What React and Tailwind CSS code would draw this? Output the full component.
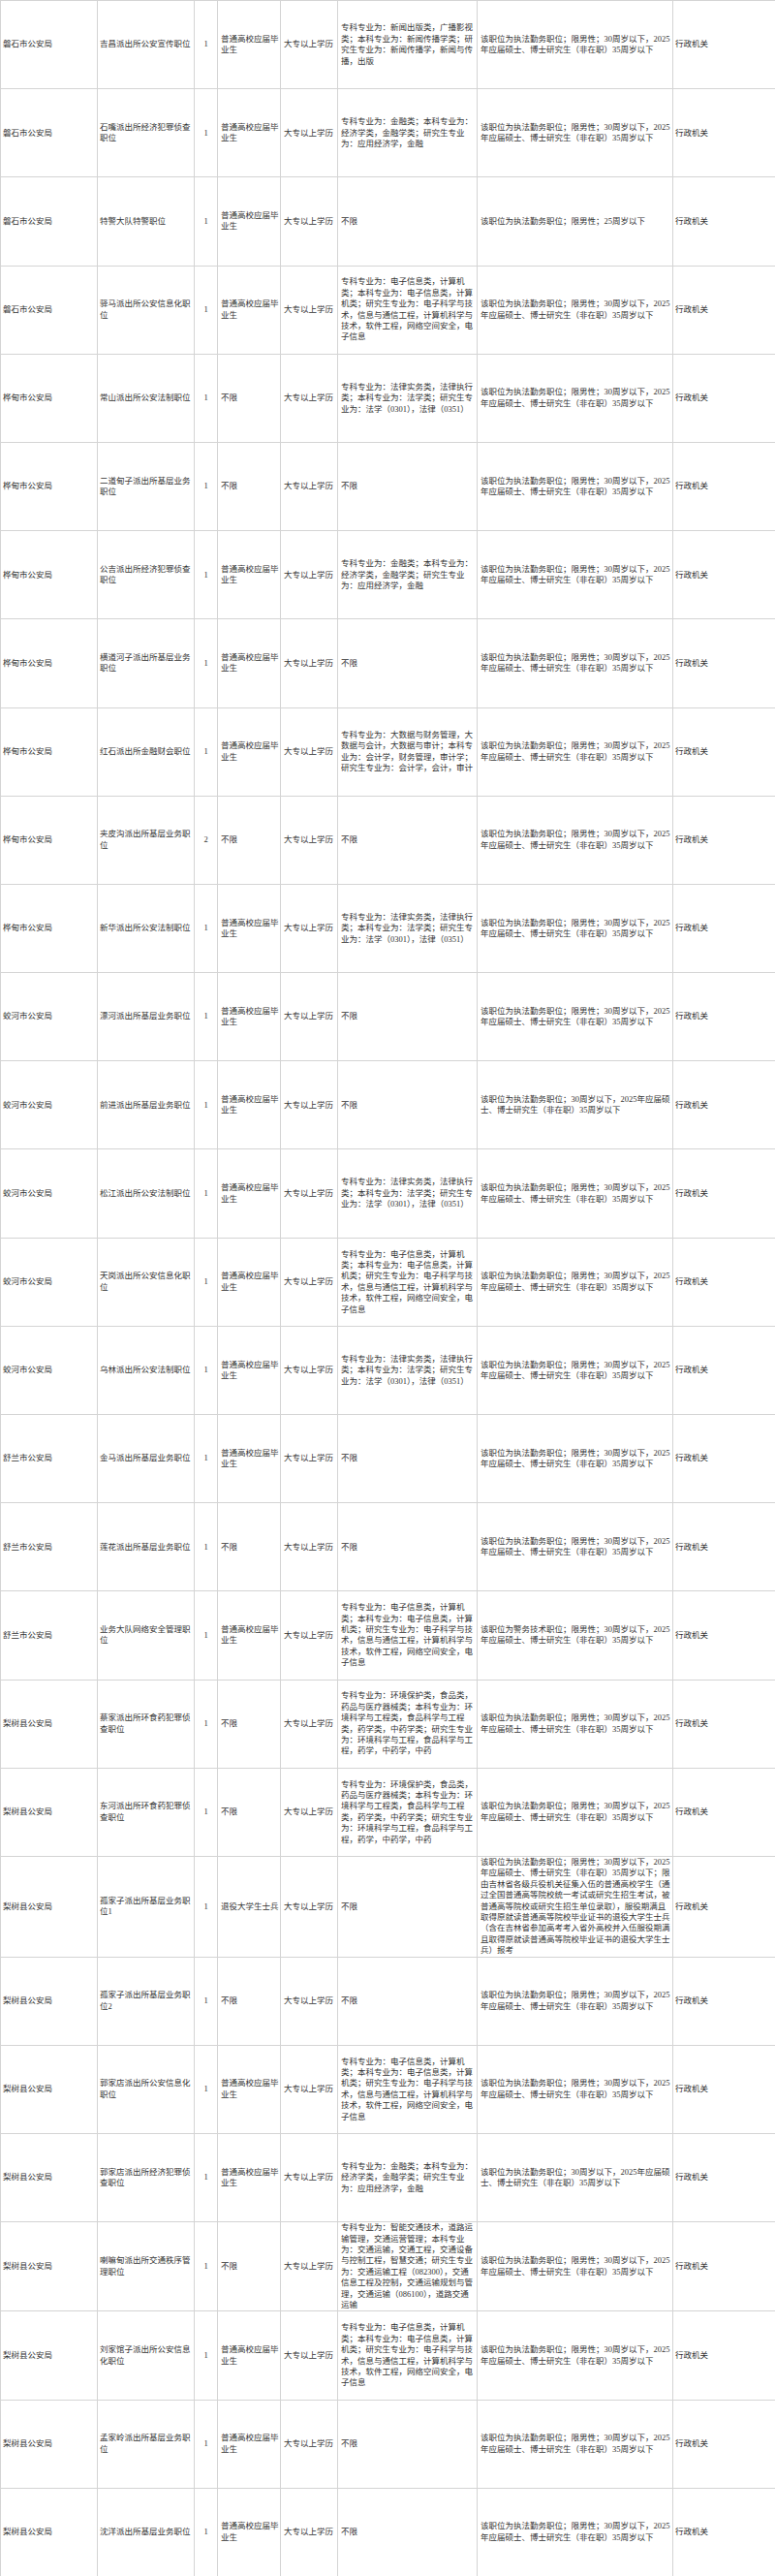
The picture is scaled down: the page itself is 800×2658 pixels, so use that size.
const A = "该职位为执法勤务职位；限男性；30周岁以下，2025年应届硕士、博士研究生（非在职）35周岁以下";
const B = "该职位为执法勤务职位；30周岁以下，2025年应届硕士、博士研究生（非在职）35周岁以下";
const IT = "专科专业为：电子信息类，计算机类；本科专业为：电子信息类，计算机类；研究生专业为：电子科学与技术，信息与通信工程，计算机科学与技术，软件工程，网络空间安全，电子信息";
const LAW = "专科专业为：法律实务类，法律执行类；本科专业为：法学类；研究生专业为：法学（0301），法律（0351）";
const FIN = "专科专业为：金融类；本科专业为：经济学类，金融学类；研究生专业为：应用经济学，金融";
const ENV = "专科专业为：环境保护类，食品类，药品与医疗器械类；本科专业为：环境科学与工程类，食品科学与工程类，药学类，中药学类；研究生专业为：环境科学与工程，食品科学与工程，药学，中药学，中药";
const YJ = "普通高校应届毕业生";
const BX = "不限";

const rows = [
  ["磐石市公安局", "吉昌派出所公安宣传职位", "1", YJ, "专科专业为：新闻出版类，广播影视类；本科专业为：新闻传播学类；研究生专业为：新闻传播学，新闻与传播，出版", A],
  ["磐石市公安局", "石嘴派出所经济犯罪侦查职位", "1", YJ, FIN, A],
  ["磐石市公安局", "特警大队特警职位", "1", YJ, BX, "该职位为执法勤务职位；限男性；25周岁以下"],
  ["磐石市公安局", "驿马派出所公安信息化职位", "1", YJ, IT, A],
  ["桦甸市公安局", "常山派出所公安法制职位", "1", BX, LAW, A],
  ["桦甸市公安局", "二道甸子派出所基层业务职位", "1", BX, BX, A],
  ["桦甸市公安局", "公吉派出所经济犯罪侦查职位", "1", YJ, FIN, A],
  ["桦甸市公安局", "横道河子派出所基层业务职位", "1", YJ, BX, A],
  ["桦甸市公安局", "红石派出所金融财会职位", "1", YJ, "专科专业为：大数据与财务管理，大数据与会计，大数据与审计；本科专业为：会计学，财务管理，审计学；研究生专业为：会计学，会计，审计", A],
  ["桦甸市公安局", "夹皮沟派出所基层业务职位", "2", BX, BX, A],
  ["桦甸市公安局", "新华派出所公安法制职位", "1", YJ, LAW, A],
  ["蛟河市公安局", "漂河派出所基层业务职位", "1", YJ, BX, A],
  ["蛟河市公安局", "前进派出所基层业务职位", "1", YJ, BX, B],
  ["蛟河市公安局", "松江派出所公安法制职位", "1", YJ, LAW, A],
  ["蛟河市公安局", "天岗派出所公安信息化职位", "1", YJ, IT, A],
  ["蛟河市公安局", "乌林派出所公安法制职位", "1", YJ, LAW, A],
  ["舒兰市公安局", "金马派出所基层业务职位", "1", YJ, BX, A],
  ["舒兰市公安局", "莲花派出所基层业务职位", "1", BX, BX, A],
  ["舒兰市公安局", "业务大队网络安全管理职位", "1", YJ, IT, "该职位为警务技术职位；限男性；30周岁以下，2025年应届硕士、博士研究生（非在职）35周岁以下"],
  ["梨树县公安局", "蔡家派出所环食药犯罪侦查职位", "1", BX, ENV, A],
  ["梨树县公安局", "东河派出所环食药犯罪侦查职位", "1", BX, ENV, A],
  ["梨树县公安局", "孤家子派出所基层业务职位1", "1", "退役大学生士兵", BX, "该职位为执法勤务职位；限男性；30周岁以下，2025年应届硕士、博士研究生（非在职）35周岁以下；限由吉林省各级兵役机关征集入伍的普通高校学生（通过全国普通高等院校统一考试或研究生招生考试，被普通高等院校或研究生招生单位录取），服役期满且取得原就读普通高等院校毕业证书的退役大学生士兵（含在吉林省参加高考考入省外高校并入伍服役期满且取得原就读普通高等院校毕业证书的退役大学生士兵）报考"],
  ["梨树县公安局", "孤家子派出所基层业务职位2", "1", BX, BX, A],
  ["梨树县公安局", "郭家店派出所公安信息化职位", "1", YJ, IT, A],
  ["梨树县公安局", "郭家店派出所经济犯罪侦查职位", "1", YJ, FIN, B],
  ["梨树县公安局", "喇嘛甸派出所交通秩序管理职位", "1", BX, "专科专业为：智能交通技术，道路运输管理，交通运营管理；本科专业为：交通运输，交通工程，交通设备与控制工程，智慧交通；研究生专业为：交通运输工程（082300），交通信息工程及控制，交通运输规划与管理，交通运输（086100），道路交通运输", A],
  ["梨树县公安局", "刘家馆子派出所公安信息化职位", "1", YJ, IT, A],
  ["梨树县公安局", "孟家岭派出所基层业务职位", "1", YJ, BX, A],
  ["梨树县公安局", "沈洋派出所基层业务职位", "1", YJ, BX, A],
];

const td = "border border-[#d4d4d4] align-middle";

const App = () => {
  return (
    <div className="w-[800px] bg-white text-[#333] text-[8.5px] leading-[11.4px] font-['Liberation_Serif','Noto_Sans_CJK_SC',serif]">
      <table className="w-[800px] table-fixed border-collapse">
        <colgroup>
          <col className="w-[100px]" />
          <col className="w-[100px]" />
          <col className="w-[24px]" />
          <col className="w-[65px]" />
          <col className="w-[59px]" />
          <col className="w-[144px]" />
          <col className="w-[202px]" />
          <col className="w-[106px]" />
        </colgroup>
        <tbody>
          {rows.map((r, i) => (
            <tr key={i} className="h-[91.2px]">
              <td className={`${td} pl-[2px] pr-[2px]`}>{r[0]}</td>
              <td className={`${td} pl-[2px] pr-[1px]`}>{r[1]}</td>
              <td className={`${td} text-center`}>{r[2]}</td>
              <td className={`${td} pl-[3px] pr-[1px]`}>{r[3]}</td>
              <td className={`${td} pl-[3px] pr-[1px]`}>大专以上学历</td>
              <td className={`${td} pl-[3px] pr-[2px]`}>{r[4]}</td>
              <td className={`${td} pl-[3px] pr-[2px]`}>{r[5]}</td>
              <td className={`${td} pl-[2px]`}>行政机关</td>
            </tr>
          ))}
        </tbody>
      </table>
    </div>
  );
};

export default App;
